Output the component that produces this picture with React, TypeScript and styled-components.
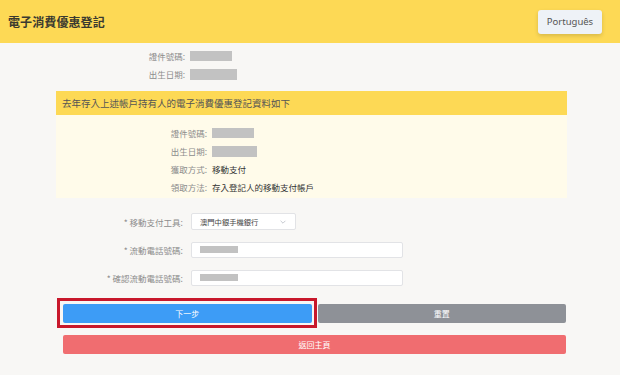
import React from 'react'
import styled, { createGlobalStyle } from 'styled-components'

const GlobalStyle = createGlobalStyle`
  * { box-sizing: border-box; }
  body {
    margin: 0;
    background: #f8f7f5;
    font-family: "Noto Sans", "Noto Sans CJK TC", sans-serif;
  }
`

const topFields = [
  { label: '證件號碼:', width: 42, height: 10 },
  { label: '出生日期:', width: 47, height: 11 },
]

const Page = styled.div`
  width: 620px;
  min-height: 375px;
  background: #f8f7f5;
`

const Header = styled.header`
  height: 43px;
  background: #fdd955;
  display: flex;
  align-items: center;
  justify-content: space-between;
  padding: 0 18px 0 8px;
`

const Title = styled.h1`
  margin: 0;
  font-size: 12px;
  font-weight: 700;
  color: #3a3a30;
  letter-spacing: 0.1px;
  font-family: "Noto Sans CJK TC", sans-serif;
`

const LangButton = styled.button`
  width: 64px;
  height: 24px;
  border: none;
  border-radius: 3px;
  background: #eef2f7;
  box-shadow: 0 2px 4px rgba(0, 0, 0, 0.15);
  color: #555;
  font-size: 9.5px;
  font-family: "Noto Sans", sans-serif;
  padding: 0;
`

const Main = styled.main`
  width: 511px;
  margin: 0 0 0 56px;
`

const FieldList = styled.div<{ $labelWidth: number; $gap: number }>`
  display: grid;
  grid-template-columns: ${(p) => p.$labelWidth}px 1fr;
  column-gap: ${(p) => p.$gap}px;
  grid-auto-rows: 18px;
  align-items: center;
  font-size: 8.5px;
  font-family: "Noto Sans CJK TC", sans-serif;
`

const TopFields = styled(FieldList)`
  padding-top: 4px;
`

const Label = styled.span`
  text-align: right;
  color: #8c8c8c;
  white-space: nowrap;
`

const Value = styled.span`
  color: #333;
  white-space: nowrap;
`

const Redacted = styled.span<{ $w: number; $h: number }>`
  display: block;
  width: ${(p) => p.$w}px;
  height: ${(p) => p.$h}px;
  background: #c2c2c2;
`

const InfoBox = styled.section`
  margin-top: 8px;
  background: #fffbea;
`

const InfoHeading = styled.div`
  height: 24px;
  background: #fdd955;
  display: flex;
  align-items: center;
  padding-left: 6px;
  font-size: 9.5px;
  color: #555;
  font-family: "Noto Sans CJK TC", sans-serif;
`

const InfoBody = styled(FieldList)`
  padding: 9px 0 2px;
`

const Form = styled.div`
  margin-top: 15px;
  display: flex;
  flex-direction: column;
  gap: 11px;
`

const FormRow = styled.div`
  display: grid;
  grid-template-columns: 127px 1fr;
  column-gap: 8px;
  align-items: center;
  height: 17px;
  font-size: 8.5px;
  font-family: "Noto Sans CJK TC", sans-serif;
`

const Select = styled.div`
  width: 105px;
  height: 17px;
  background: #fff;
  border: 1px solid #e2e3e6;
  border-radius: 2px;
  display: flex;
  align-items: center;
  justify-content: space-between;
  padding: 0 8px 0 8px;
  font-size: 7.3px;
  color: #444;

  svg {
    width: 8px;
    height: 8px;
    color: #b8bcc4;
  }
`

const Input = styled.div`
  width: 212px;
  height: 16px;
  background: #fff;
  border: 1px solid #e2e3e6;
  border-radius: 2px;
  display: flex;
  align-items: center;
  padding-left: 8px;
`

const Buttons = styled.div`
  margin: 18px 0 0 7px;
  display: flex;
  flex-direction: column;
  gap: 12px;
  width: 503px;
`

const ButtonRow = styled.div`
  display: flex;
  gap: 6px;
`

const ButtonSlot = styled.div`
  position: relative;
  flex: 1;
  display: flex;
`

const Highlight = styled.span`
  position: absolute;
  inset: -6px -5px -5px -6px;
  border: 3px solid #c8182b;
  pointer-events: none;
`

const ActionButton = styled.button<{ $bg: string }>`
  flex: 1 1 auto;
  height: 19px;
  border: none;
  border-radius: 2px;
  background: ${(p) => p.$bg};
  color: #fff;
  font-size: 8px;
  font-family: "Noto Sans CJK TC", sans-serif;
  padding: 0;
`

const Chevron = () => (
  <svg viewBox="0 0 10 10" fill="none">
    <path d="M2 3.5 L5 6.5 L8 3.5" stroke="currentColor" strokeWidth="1" />
  </svg>
)

export default function App() {
  return (
    <Page>
      <GlobalStyle />
      <Header>
        <Title>電子消費優惠登記</Title>
        <LangButton>Português</LangButton>
      </Header>
      <Main>
        <TopFields $labelWidth={129} $gap={5}>
          {topFields.map((f) => (
            <React.Fragment key={f.label}>
              <Label>{f.label}</Label>
              <Redacted $w={f.width} $h={f.height} />
            </React.Fragment>
          ))}
        </TopFields>

        <InfoBox>
          <InfoHeading>去年存入上述帳戶持有人的電子消費優惠登記資料如下</InfoHeading>
          <InfoBody $labelWidth={151} $gap={5}>
            <Label>證件號碼:</Label>
            <Redacted $w={42} $h={10} />
            <Label>出生日期:</Label>
            <Redacted $w={45} $h={11} />
            <Label>獲取方式:</Label>
            <Value>移動支付</Value>
            <Label>領取方法:</Label>
            <Value>存入登記人的移動支付帳戶</Value>
          </InfoBody>
        </InfoBox>

        <Form>
          <FormRow>
            <Label>* 移動支付工具:</Label>
            <Select>
              <span>澳門中銀手機銀行</span>
              <Chevron />
            </Select>
          </FormRow>
          <FormRow>
            <Label>* 流動電話號碼:</Label>
            <Input>
              <Redacted $w={38} $h={7} />
            </Input>
          </FormRow>
          <FormRow>
            <Label>* 確認流動電話號碼:</Label>
            <Input>
              <Redacted $w={38} $h={7} />
            </Input>
          </FormRow>
        </Form>

        <Buttons>
          <ButtonRow>
            <ButtonSlot>
              <ActionButton $bg="#3d9cf6">下一步</ActionButton>
              <Highlight />
            </ButtonSlot>
            <ButtonSlot>
              <ActionButton $bg="#8e9197">重置</ActionButton>
            </ButtonSlot>
          </ButtonRow>
          <ActionButton $bg="#f06d70">返回主頁</ActionButton>
        </Buttons>
      </Main>
    </Page>
  )
}
